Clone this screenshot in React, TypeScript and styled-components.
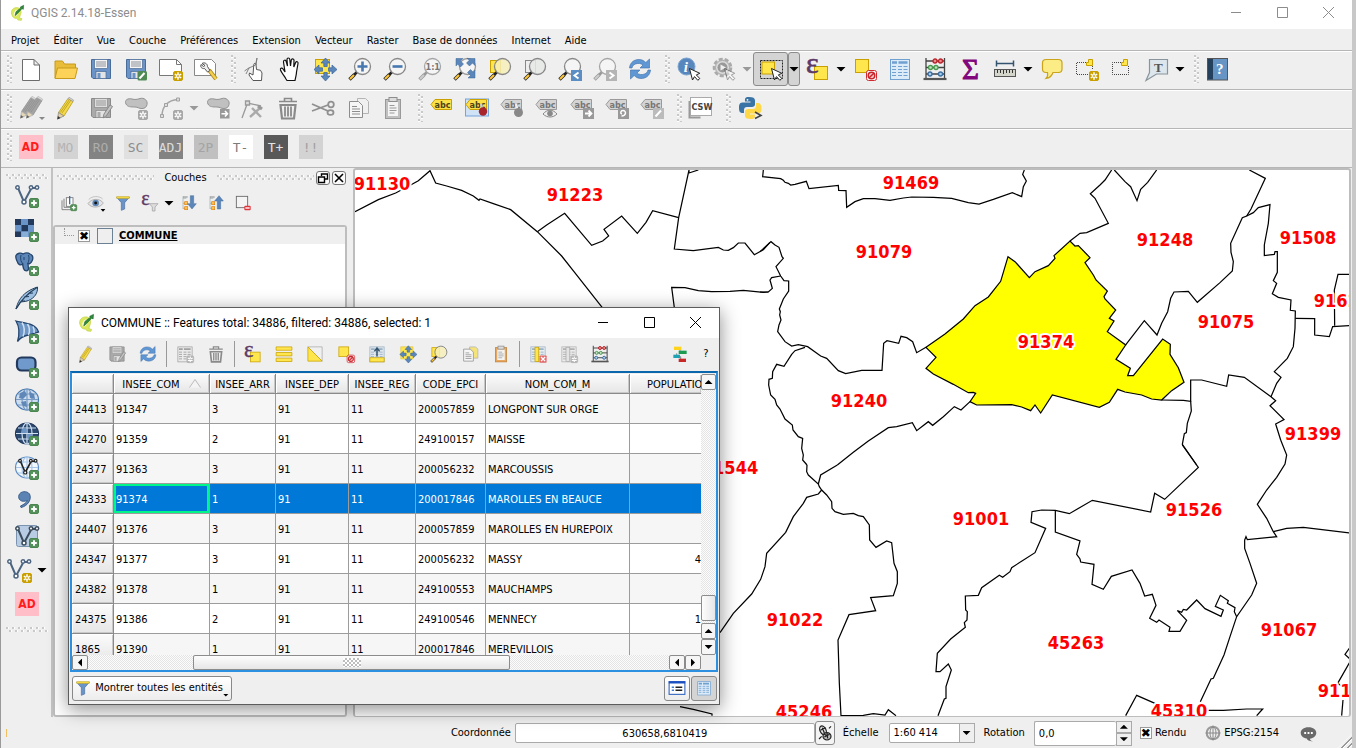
import React from "react";
import styled, { createGlobalStyle, css } from "styled-components";

const UI = `"DejaVu Sans Condensed", "DejaVu Sans", sans-serif`;
const TITLE = `Roboto, "Open Sans", sans-serif`;

const Global = createGlobalStyle`
  *, *::before, *::after { box-sizing: border-box; }
  body { margin: 0; background: #c8c8c8; font: 11px/14px ${UI}; color: #000; }
  button, input, select { font: inherit; color: inherit; margin: 0; }
  button { padding: 0; border: 0; background: none; }
`;

/* ---------- icon parts ---------- */

const Plus = () => (
  <g>
    <rect x="14.5" y="14.5" width="9" height="9" rx="1.5" fill="#55915a" stroke="#4a8550" />
    <path d="M19 16.2v5.6M16.2 19h5.6" stroke="#fff" strokeWidth="2" />
  </g>
);
const Star = ({ c = "#c9a000", x = 14, y = 14 }: { c?: string; x?: number; y?: number }) => (
  <g transform={`translate(${x} ${y})`}>
    <rect x=".5" y=".5" width="9" height="9" rx="1.5" fill={c} stroke={c} />
    <path d="M5 1.2v7.6M1.8 3.2l6.400 3.6M8.200 3.2L1.800 6.8" stroke="#fff" strokeWidth="1.500" />
    <circle cx="5" cy="5" r=".9" fill={c} />
  </g>
);
const Cursor = ({ o = 1 }: { o?: number }) => (
  <path d="M12.500 11.500l3 11.500 2-3.400 3.300 3.700 2-1.800-3.500-3.600 3.500-1.600z" fill="#fff" stroke="#222" strokeWidth="1" opacity={o} />
);
const Lens = ({ h = "#fcc53a", k = "#222", s = "#888", f = "#f4f6f4" }) => (
  <g>
    <path d="M9 15L5.500 18.500" stroke={k} strokeWidth="2.600" />
    <path d="M6.500 17.500L1.500 22.500" stroke={k} strokeWidth="3.400" />
    <path d="M6 18L2 22" stroke={h} strokeWidth="2.200" />
    <circle cx="14.500" cy="9.500" r="8" fill={f} fillOpacity=".85" stroke={s} strokeWidth="1.300" />
  </g>
);
const Floppy = ({ b = "#6a94c8", e = "#4a6c98", l = "#f4f4f4", t = "#8a9199" }) => (
  <g>
    <path d="M2.500 2.500h19v19H4l-1.500-1.500z" fill={b} stroke={e} />
    <rect x="5.500" y="2.500" width="13" height="9" fill={l} stroke={e} strokeWidth=".7" />
    <path d="M7 5h10M7 7h10M7 9h10" stroke={t} strokeWidth="1" />
    <rect x="7" y="14.500" width="10" height="7" fill="#e4e4e4" stroke={e} strokeWidth=".7" />
    <rect x="8.500" y="16" width="3" height="5" fill={b} />
  </g>
);
const Pencil = ({ b = "#f4d84a", d = "#b89c18", t = "#8a8a8a" }) => (
  <g>
    <path d="M4.500 16.500L14 2.500l5 3L10 20z" fill={b} stroke={d} strokeWidth=".8" />
    <path d="M8 17L17 4M6.300 16.500L15.500 3.500" stroke={d} strokeWidth=".8" />
    <path d="M4.500 16.500L3.500 23l6.500-3z" fill="#e2cfa4" stroke={t} strokeWidth=".8" />
    <path d="M3.300 23.500l.6-3.500 2.600 2z" fill="#333" />
    <path d="M14 2.500l1-1.200 4.500 2.700-.5 1.500z" fill="#ddd" stroke={t} strokeWidth=".6" />
  </g>
);
const Refresh = () => (
  <g fill="#5f96d4" stroke="#3c6ea8" strokeWidth=".6">
    <path d="M1.500 11C2 5 6.500 2.500 11 2.500c3 0 5 1.200 6.800 3L21.500 2v9h-9.500l3-3C13 6.300 10 6 7.500 7c-2 .8-3 2-3.500 4z" />
    <path d="M22.500 13c-.5 6-5 8.500-9.500 8.500-3 0-5-1.200-6.800-3L2.500 22v-9h9.500l-3 3c2 1.700 5 2 7.500 1 2-.8 3-2 3.500-4z" />
  </g>
);
const Trash = ({ c = "#8a8a8a" }) => (
  <g fill="none" stroke={c} strokeWidth="1.600">
    <path d="M3 5.500h18M8.500 5V2.500h7V5" />
    <path d="M4.500 9h15l-1.500 13.500H6z" strokeWidth="2.200" />
    <path d="M9 10.500v10M12 10.500v10M15 10.500v10" strokeWidth="1.800" />
  </g>
);
const Epsilon = ({ s = 30, x = 0, y = 16 }) => (
  <text x={x} y={y} fontSize={s} fontFamily="Liberation Serif, serif" fill="#5d3a66" stroke="#5d3a66" strokeWidth=".6">ε</text>
);
const No = () => (
  <g>
    <rect x="13.500" y="13.500" width="10" height="10" rx="2" fill="#fff" stroke="#d02a30" />
    <circle cx="18.500" cy="18.500" r="3.300" fill="#f4c4c4" stroke="#c8242c" strokeWidth="1.500" />
    <path d="M16.200 20.800l4.600-4.600" stroke="#c8242c" strokeWidth="1.500" />
  </g>
);
const Label = ({ f = "#d4d4d4", s = "#9a9a9a", t = "#777" }) => (
  <g>
    <path d="M1 8.500L5 3.500h16.500v10H5z" fill={f} stroke={s} />
    <text x="4.500" y="11.500" fontSize="9" fontWeight="bold" fontFamily="DejaVu Sans Condensed, DejaVu Sans, sans-serif" fill={t}>abc</text>
  </g>
);
const Table = ({ c = "#6fa0d0", f = "#dcebf8" }) => (
  <g>
    <rect x="2.500" y="2.500" width="19" height="20" fill={f} stroke={c} />
    <path d="M4 5.500h5M10.500 5.500h9" stroke={c} strokeWidth="2.400" />
    <path d="M4 9.500h4M10 9.500h4M15.500 9.500h4M4 12.500h4M10 12.500h4M15.500 12.500h4M4 15.500h4M10 15.500h4M15.500 15.500h4M4 18.500h4M10 18.500h4M15.500 18.500h4" stroke={c} strokeWidth="1.200" />
  </g>
);
const Blob = () => (
  <path d="M2 8c-2-4 2-6 6-5 3 .8 5 .5 8-.500 4-1.200 8 2 7 6-.5 2.500-2 4-5 4-3 .2-4-1.500-7-1.500C7 11 3.500 11 2 8z" fill="#c0c0c0" stroke="#929292" />
);
const Abacus = () => (
  <g fill="none" strokeWidth="1.300">
    <path d="M3 1v21M21.500 1v21M3 4h18.500M3 10.500h18.500M3 17h18.500" stroke="#444" />
    <path d="M.5 22h23" stroke="#555" strokeWidth="2.200" />
    <g stroke="#b8242c" fill="#e88"><circle cx="12" cy="4" r="2" /><circle cx="17.500" cy="4" r="2" /></g>
    <g stroke="#4a9a50" fill="#bfe4bf"><circle cx="7.500" cy="10.500" r="2" /><circle cx="13" cy="10.500" r="2" /></g>
    <g stroke="#3c6ea0" fill="#a8cdee"><circle cx="7" cy="17" r="2" /><circle cx="17.500" cy="17" r="2" /></g>
  </g>
);
const Filter = () => (
  <g>
    <path d="M2.500 3.500h19l-7 8v9.500l-5 2v-11.500z" fill="#6a94c8" stroke="#4a70a0" />
    <path d="M2.500 2.500h19v2.500h-19z" fill="#ffe34a" stroke="#c0a010" strokeWidth=".8" />
  </g>
);
const Vee = ({ c = "#4c6480" }) => (
  <g fill="#fff" stroke={c} strokeWidth="1.500">
    <path d="M3 4l6 14L16 5M16 4h6" strokeWidth="2" fill="none" />
    <circle cx="2.500" cy="3.500" r="1.700" /><circle cx="9" cy="18" r="2" /><circle cx="16" cy="3.500" r="1.700" /><circle cx="22" cy="3.500" r="1.700" />
  </g>
);
const Globe = ({ f = "#cfdeee", s = "#4a7ab0", g = "#7a9cc4" }) => (
  <g fill="none" stroke={g} strokeWidth="1.200">
    <ellipse cx="12" cy="11.500" rx="11.500" ry="10.500" fill={f} stroke={s} />
    <ellipse cx="12" cy="11.500" rx="5" ry="10.500" />
    <path d="M12 1v21M1 11.500h22M3 6h18M3 17h18" />
  </g>
);
const Arrows4 = () => (
  <g fill="#5a86ba" stroke="#3c6596" strokeWidth=".7">
    <path d="M12.500 1l4.500 5h-2.800v3.500h-3.400V6H8zM12.500 24l4.500-5h-2.800v-3.500h-3.400V19H8zM1 12.500L6 8v2.800h3.500v3.400H6V17zM24 12.500L19 8v2.800h-3.500v3.400H19V17z" />
  </g>
);
const Docs = ({ f = "#f0f0f0", s = "#8d8d8d" }) => (
  <g>
    <path d="M11.500 2.500h8l3 3v12h-11z" fill={f} stroke="#b4b4b4" />
    <path d="M3.500 5.500h9l4 4v12h-13z" fill="#f6f6f6" stroke={s} />
    <path d="M6 10.500h5M6 13h8M6 15.500h8M6 18h8" stroke={s} />
  </g>
);
const Clip = ({ b = "#c0c0c0", s = "#999" }) => (
  <g>
    <rect x="4.500" y="3.500" width="15" height="19" fill={b} stroke={s} />
    <rect x="7" y="6" width="10" height="14" fill="#f4f4f4" />
    <rect x="8" y="1.500" width="8" height="4" fill="#ddd" stroke="#8d8d8d" />
    <path d="M8.500 9.500h5M8.500 12h7M8.500 14.500h7M8.500 17h5" stroke="#9a9a9a" />
  </g>
);
const Leaf = () => (
  <g>
    <path d="M4 14C2 8 7 3 13 4c5 1 6 6 4.500 10-1 3-2 4-1 6l3 .5-1 2.500-5-.5-2-2.500c-4 .5-6.500-2-7.500-6z" fill="#dce85c" stroke="#c2d048" />
    <ellipse cx="10.500" cy="12" rx="3" ry="5" fill="#fafad8" transform="rotate(25 10.500 12)" />
    <path d="M9 16L10.500 10 17.500 4.500 17 3l5-2.500-.5 6-2-1L12.500 13z" fill="#2f8a3c" stroke="#1c6328" strokeWidth=".8" />
  </g>
);
const Tree = () => (
  <g>
    <path d="M3 2v19M3 5h5M3 12.500h5M3 20h5" stroke="#9aa" fill="none" />
    <rect x="5.500" y="10" width="4.500" height="4.500" fill="#ffc04a" stroke="#e08010" />
    <rect x="5.500" y="17.500" width="4.500" height="4.500" fill="#ffc04a" stroke="#e08010" />
    <path d="M3 3h7" stroke="#888" strokeWidth="1.500" />
  </g>
);

const icons: Record<string, React.ReactNode> = {
  leaf: <Leaf />,
  newDoc: <path d="M3.500 2.500h11.500l5.500 5.500v15.500h-17zM15 2.500V8h5.500" fill="#fff" stroke="#6c6c6c" />,
  open: <g stroke="#c79a1c"><path d="M1 21V4h7.500l2 3h11v5" fill="#e9bd3a" /><path d="M1 21.500L3.500 11h20L21 21.500z" fill="#fcd358" /></g>,
  save: <Floppy />,
  saveAs: <g><Floppy /><rect x="13.500" y="14" width="9.500" height="9.500" rx="1.500" fill="#4f8a55" /><path d="M15.500 21.500l5-5.500" stroke="#fff" strokeWidth="2" /></g>,
  composer: <g><path d="M.5 2.500h17l5 5v11H.5z" fill="#fff" stroke="#777" /><path d="M17.500 2.500v5h5" fill="none" stroke="#777" /><Star /></g>,
  manager: <g><path d="M.5 2.500h17l4 4v12H.5z" fill="#fff" stroke="#888" /><path d="M15 13l7 9" stroke="#a5811c" strokeWidth="4" /><path d="M15 13l7 9" stroke="#f2cf4c" strokeWidth="2.500" /><path d="M8 6.500c2.500-1.500 5.500 0 5.500 3l2.500 4-2.500 1.500-3-3.500C7.500 12 6 9.500 7 7.500l2.500 2 1.500-1z" fill="#eee" stroke="#555" /></g>,
  touch: <g fill="#fff" stroke="#444" strokeWidth=".9"><path d="M10 23.500l-4-5.500.5-2 3.500 2 .8-10.500c.3-1.600 2-1.600 2.200 0l.5 5 4 .8 1.500 2.700-.5 7.500z" /><path d="M1.500 14l5-3.500M3 17l3-6 6.500-3L14 1l-1 7" stroke="#777" fill="none" /></g>,
  pan: <path d="M8 22c-1.500-3-4.500-6-5.500-9-.5-2 1.500-2.500 2.500-1l2 3L5.500 5c-.3-2 2.200-2.500 2.700-.500L9.500 9 9 2.500c0-2 2.600-2 2.800 0L12.500 9l.8-6c.3-1.800 2.700-1.500 2.700.3L15.800 10l1.800-4.500c.8-1.500 2.800-.8 2.400 1L18.500 15c0 3-1 5-1.500 8.500H9z" fill="#fff" stroke="#111" strokeWidth="1.200" />,
  panSel: <g><rect x="2.500" y="2.500" width="14" height="14" fill="#ffe64c" stroke="#c9a000" /><Arrows4 /></g>,
  zoomIn: <g><Lens /><path d="M14.500 4.500v10M9.500 9.500h10" stroke="#4878b0" strokeWidth="2.600" /></g>,
  zoomOut: <g><Lens /><path d="M9.500 9.500h10" stroke="#4878b0" strokeWidth="2.600" /></g>,
  zoomOne: <g><Lens h="#ccc" k="#999" s="#a5a5a5" /><text x="7.500" y="13" fontSize="9" fontWeight="bold" fontFamily="DejaVu Sans Condensed, DejaVu Sans, sans-serif" fill="#777">1:1</text></g>,
  zoomFull: <g><Lens s="#999" /><path d="M3 1.500h7L7.500 4l3 3-3 3-3-3L3 9zM22 1.500v7L19.500 6l-3 3-3-3 3-3L14 1.500zM22 21h-7l2.500-2.500-3-3 3-3 3 3L22 13z" fill="#5a86ba" stroke="#3c6596" strokeWidth=".5" /></g>,
  zoomSel: <g><rect x="2.500" y="3.500" width="10" height="12" fill="#ffe64c" stroke="#c9a000" /><Lens f="#f7eeb8" /></g>,
  zoomLayer: <g><rect x="2.500" y="3.500" width="10" height="12" fill="#eee" stroke="#888" /><Lens f="#e6e9e6" /></g>,
  zoomLast: <g><Lens /><rect x="13" y="13" width="11" height="11" fill="#5b8ec2" /><path d="M20.500 15.500l-4 3 4 3" stroke="#fff" strokeWidth="2" fill="none" /></g>,
  zoomNext: <g><Lens h="#ccc" k="#999" s="#a5a5a5" /><rect x="13" y="13" width="11" height="11" fill="#b4b4b4" /><path d="M16.500 15.500l4 3-4 3" stroke="#fff" strokeWidth="2" fill="none" /></g>,
  refresh: <Refresh />,
  identify: <g><circle cx="9.500" cy="9.500" r="8.500" fill="#5787bd" stroke="#7aa3d0" /><text x="6.800" y="14.500" fontSize="15" fontStyle="italic" fontWeight="bold" fontFamily="Liberation Serif, serif" fill="#fff">i</text><Cursor /></g>,
  action: <g><circle cx="10.500" cy="10.500" r="8.500" fill="#ddd" stroke="#aaa" strokeWidth="2.600" strokeDasharray="4 2" /><circle cx="10.500" cy="10.500" r="7" fill="#ddd" stroke="#aaa" /><circle cx="10.500" cy="10.500" r="5" fill="#999" /><path d="M8.500 7.500l5.500 3-5.500 3z" fill="#eee" /><Cursor o={0.4} /></g>,
  select: <g><rect x="1.500" y="3.500" width="22" height="18" fill="none" stroke="#222" strokeDasharray="2 1" /><rect x="3" y="5" width="12.500" height="12" fill="#ffe64c" stroke="#c9a000" /><Cursor /></g>,
  selExpr: <g><rect x="8.500" y="9.500" width="13" height="13" fill="#ffe64c" stroke="#c9a000" /><Epsilon /></g>,
  deselect: <g><rect x="2.500" y="2.500" width="13" height="13" fill="#ffe64c" stroke="#c9a000" /><No /></g>,
  table: <Table />,
  abacus: <Abacus />,
  sigma: <text x="4" y="22" fontSize="29" fontFamily="Liberation Serif, serif" fill="#82067c" stroke="#82067c">Σ</text>,
  ruler: <g><path d="M3.500 6.500h17M3.500 3.500v6M20.500 3.500v6" stroke="#33536e" strokeWidth="1.500" /><rect x="1.500" y="12.500" width="21" height="7" fill="#d4d6cc" stroke="#555" /><path d="M4.500 13v3M7.500 13v3M10.500 13v4M13.500 13v3M16.500 13v3M19.500 13v3" stroke="#333" /></g>,
  tip: <path d="M6 2.500h12.500c2 0 3.500 1.500 3.500 3.500v6c0 2-1.500 3.500-3.500 3.500H13c-1 3-3.500 5.500-7 6 1.500-1.500 2-3.500 1.500-6H6c-2 0-3.500-1.500-3.500-3.500V6c0-2 1.500-3.500 3.500-3.500z" fill="#fbec86" stroke="#c9a41c" strokeWidth="1.200" />,
  bmNew: <g><path d="M11 5.500H1.500v12H13M17.500 9v4" fill="none" stroke="#444" strokeDasharray="1 1" /><path d="M13.500 2.500h4v6h-6v-3h2z" fill="#ffe64c" stroke="#c9a000" /><Star /></g>,
  bmShow: <g><path d="M11 5.500H2.500v12h16V9" fill="none" stroke="#444" strokeDasharray="1 1" /><path d="M13.500 2.500h4v6h-6v-3h2z" fill="#ffe64c" stroke="#c9a000" /></g>,
  textNote: <g><path d="M4.500 2.500h18v14.500h-11L1 23.500l3.500-8z" fill="#dce6ec" stroke="#8a949c" strokeWidth="1.200" /><text x="9" y="14.500" fontSize="13" fontWeight="bold" fontFamily="Liberation Serif, serif" fill="#555">T</text></g>,
  help: <g><rect x="1.500" y="1.500" width="20" height="21.500" fill="#6694c4" stroke="#555" /><rect x="2" y="2" width="5" height="20.500" fill="#24405c" /><text x="10" y="17" fontSize="15" fontFamily="Liberation Serif, serif" fontWeight="bold" fill="#fff">?</text></g>,
  pencils: <g><g opacity=".75"><g transform="translate(-2 -1)"><Pencil b="#8b8b8b" d="#707070" t="#999" /></g><g transform="translate(4 -1)"><Pencil b="#8b8b8b" d="#707070" t="#999" /></g></g><path d="M20 21h6l-3 3z" fill="#888" /></g>,
  pencil: <Pencil />,
  saveEdit: <g><Floppy b="#aaa" e="#8a8a8a" l="#ddd" t="#999" /><path d="M14 22l1-4 6-9 2.500 1.500-6 9z" fill="#c4c4c4" stroke="#888" /></g>,
  blobStar: <g><Blob /><Star c="#a8a8a8" /></g>,
  curve: <g><path d="M3 20C3 10 9 4 19 3.500" fill="none" stroke="#a4a4a4" strokeWidth="1.500" /><path d="M1.500 18.500h3v3h-3zM5.500 7.500h3v3h-3zM17.500 2h3v3h-3z" fill="#ddd" stroke="#a0a0a0" /><Star c="#a8a8a8" /></g>,
  blobArrow: <g><Blob /><rect x="14" y="13" width="9.500" height="9.500" fill="#999" /><path d="M15.500 17.700h6M19 15l2.500 2.700L19 20.500" stroke="#fff" strokeWidth="1.600" fill="none" /></g>,
  node: <g fill="none" stroke="#999" strokeWidth="1.300"><path d="M1 22L6.500 7 20 10" /><path d="M4.500 5h4v4h-4z" fill="#ddd" /><path d="M9 21l10-9M11 12l9 9" strokeWidth="2.400" stroke="#aaa" /><path d="M17 10l4 3" strokeWidth="3" /></g>,
  trash: <Trash />,
  cut: <g fill="none" stroke="#909090" strokeWidth="1.800"><path d="M1 8l16 7M1 15l16-6" /><circle cx="20" cy="8.500" r="2.800" /><ellipse cx="19.500" cy="16.500" rx="3" ry="2.400" /></g>,
  copy: <Docs />,
  paste: <Clip />,
  abcY: <Label f="#fbe04a" s="#c9a000" t="#4c4414" />,
  abcPin: <g><rect x=".5" y="3" width="23" height="17" fill="#cfe2f6" stroke="#74a4dc" /><Label f="#fbe04a" s="#c9a000" t="#4c4414" /><path d="M16 8l1.500 6" stroke="#ccc" strokeWidth="2.500" /><circle cx="18" cy="15.500" r="4.200" fill="#a8242c" /></g>,
  abcPinG: <g><Label /><path d="M16 8l1.500 6" stroke="#eee" strokeWidth="2.500" /><circle cx="18.500" cy="16.500" r="4.500" fill="#888" /></g>,
  abcEye: <g><Label /><path d="M8 18c4-5 10-5 14 0-4 4-10 4-14 0z" fill="#eee" stroke="#888" /><circle cx="15" cy="17.500" r="2.800" fill="#888" /></g>,
  abcMove: <g><Label /><rect x="13" y="12" width="11" height="11" fill="#999" /><path d="M15 17.500h6M18.500 14.500l3 3-3 3" stroke="#fff" strokeWidth="1.800" fill="none" /></g>,
  abcRot: <g><Label /><rect x="13" y="12" width="11" height="11" fill="#999" /><path d="M16.500 20c5 0 5-5.500 1.500-5.500-2.500 0-3 3-1 3.500" stroke="#fff" strokeWidth="1.500" fill="none" /></g>,
  abcEdit: <g><Label /><rect x="13" y="12" width="11" height="11" fill="#bbb" /><path d="M15.500 20.500l5.500-6" stroke="#fff" strokeWidth="2" /></g>,
  csw: <g><path d="M.5 5v16.500h11" fill="none" stroke="#999" strokeWidth="2" /><rect x="1.500" y="1.500" width="21" height="18" fill="#fff" stroke="#aaa" /><text x="2.500" y="14" fontSize="9" fontWeight="bold" fontFamily="DejaVu Sans Condensed, DejaVu Sans, sans-serif" fill="#444">CSW</text></g>,
  python: <g><path d="M11 1C6.500 1 7 3 7 5.500h5.500v1H4.500C1 6.500 1 10 1 11.500S1 17 4 17h2v-3c0-2 1-3 3-3h5c1.500 0 3-1 3-2.500V4.500C17 2 15 1 11 1z" fill="#3a73a5" /><circle cx="9.500" cy="3.800" r=".9" fill="#fff" /><path d="M12.500 23c4.500 0 4.500-2 4.500-4.500h-5v-1h8c3 0 3.500-3 3.500-5S23 7 20 7h-2v3c0 2-1 3-3 3h-5c-1.500 0-3 1-3 2.500V20c0 2 2 3 5.500 3z" fill="#ffd848" /><path d="M17 16l6 3.500-6 3" stroke="#444" strokeWidth="1.600" fill="none" /></g>,
  vector: <g><Vee /><Plus /></g>,
  vectorNew: <g><Vee /><Star x={15} y={15} /></g>,
  raster: <g><path d="M0 1h19v18H0z" fill="#6a94c8" /><path d="M0 1h6v6H0zM13 1h6v6h-6zM6.500 7h6.500v6.500H6.500zM0 13.500h6V19H0z" fill="#22395c" /><path d="M6.500 13.500H13V19H6.500z" fill="#88aed8" /><Plus /></g>,
  postgis: <g><path d="M1 3.500C2 1 6 .5 8 2c2-1 5-1.500 7 0 3 1 3.500 4 2 7-1 2-2 3-4 3l.5 5c-.5 2.500-4 2.500-5-.5L7.500 12C5 14 3 12 2 9 1 7 .5 5 1 3.500z" fill="#5d86b8" stroke="#23456e" strokeWidth="1.300" /><path d="M6 3c-1 4 0 8 2.500 9M13.500 3c1 3 .5 6-1 9M9 5v3" stroke="#23456e" fill="none" /><Plus /></g>,
  spatialite: <g><path d="M1 23C3 15 7 6 22.500 1c.5 6-3 11-9 13.500-4 1.500-6 1-8 1.500z" fill="#9dbfe2" stroke="#24405c" /><path d="M1 23C5 16 10 9 22 1.500M6 15l4 0M9 11l5-.5M13 7.500l5-.5" stroke="#24405c" fill="none" strokeWidth="1.200" /><Plus /></g>,
  mssql: <g><path d="M1 1c7 2 20 2 22.500 11L13 15C8 16 5 18 2.500 21.500 5 13 4 6 1 1z" fill="#6d96c6" stroke="#23456e" strokeWidth="1.300" /><path d="M7 2.500c2.500 4 3 9 1 14M12.500 4c2 3 2.500 7 1 11M18 6.500c1 2 1.500 4 1 6.500" stroke="#cfe0f2" fill="none" strokeWidth="1.500" /><Plus /></g>,
  oracle: <g><rect x="2" y="3.500" width="18.500" height="13" rx="4.500" fill="#6f9acb" stroke="#23395c" strokeWidth="2.200" /><Plus /></g>,
  wms: <g><Globe /><path d="M5 5l5-2 2 4-4 4-4-1zM14 4l5 2 1 5-5-1zM6 14l5-1 1 6-4-1z" fill="#5f88b8" /><Plus /></g>,
  wcs: <g><Globe f="#2c4a70" s="#23395c" g="#cfe0f2" /><path d="M7 6.500h4.500V11H7zM12.500 12H17v4.500h-4.500z" fill="#6d96c6" /><Plus /></g>,
  wfs: <g><Globe f="#f2f7fc" g="#a8c6e6" s="#5f8fc6" /><g transform="translate(3 2) scale(.8)"><Vee c="#222" /></g><Plus /></g>,
  csv: <g><path d="M12.500 10.500C6 13 2.500 9 4 5c1.500-4 8-4.500 10.500-1C17 9 13 16 6 17.500l-.5-1.500c3.500-1.500 6-3.500 7-5.500z" fill="#5b83b4" stroke="#3c608c" /><Plus /></g>,
  virtual: <g><rect x="1.500" y="1.500" width="21" height="21" rx="2" fill="#b8cde4" stroke="#7a94b0" /><g transform="translate(0 1)"><Vee c="#3c4c5c" /></g><Plus /></g>,
  groupAdd: <g fill="#fff" stroke="#777" strokeWidth="1.300"><path d="M1.500 8v14h13" fill="none" /><path d="M4.500 5.500v13h13" fill="none" /><rect x="8" y="4" width="10" height="13" /><path d="M13 14V1.500" stroke="#3c6ea8" strokeWidth="2" /><Plus /></g>,
  eye: <g><path d="M0 13C5 5 17 4 23 12c-5 8-18 8-23 1z" fill="#e4e4e4" stroke="#999" /><circle cx="11.500" cy="12" r="5" fill="#5f88b8" /><circle cx="11.500" cy="12" r="2.200" fill="#111" /><path d="M1 7c5-6 16-6 21-1" stroke="#aaa" fill="none" /><path d="M19 21h7l-3.500 4z" fill="#000" /></g>,
  filter: <Filter />,
  exprFilter: <g><Epsilon x={-1} y={15} /><path d="M11 13h13l-4.500 5v6h-4v-6z" fill="#ddd" stroke="#999" /></g>,
  expand: <g><Tree /><path d="M14 1h5v12h4l-6.500 8L10 13h4z" fill="#5a86ba" stroke="#3c6596" strokeWidth=".7" /></g>,
  collapse: <g><Tree /><path d="M14 21h5V9h4l-6.500-8L10 9h4z" fill="#5a86ba" stroke="#3c6596" strokeWidth=".7" /></g>,
  remove: <g><rect x="2" y="2" width="17" height="17" fill="#f4f4f4" stroke="#666" strokeWidth="1.300" /><rect x="14" y="16" width="9.500" height="7" rx="1.500" fill="#e0343c" /><path d="M15.500 19.500h6.500" stroke="#fff" strokeWidth="2" /></g>,
  tableNew: <g><Table c="#a0a0a0" f="#ececec" /><Star c="#b4b4b4" /></g>,
  selAll: <g fill="#ffe64c" stroke="#c9a000"><path d="M1.500 2.500h21v4.500h-21zM1.500 10h21v4.500h-21zM1.500 17.500h21V22h-21z" /></g>,
  invert: <g><path d="M2.500 2.500h19v19z" fill="#f0f0f0" stroke="#aaa" /><path d="M2.500 2.500v19h19z" fill="#ffe64c" stroke="#c9a000" /></g>,
  moveTop: <g><Table c="#9ab0c4" f="#e0e8ee" /><rect x="2.500" y="17" width="19" height="5.500" fill="#ffe64c" stroke="#c9a000" /><path d="M12 15V5M8.500 8.500L12 4l3.500 4.500" stroke="#33536e" strokeWidth="2" fill="none" /></g>,
  panSel2: <g><rect x="2.500" y="2.500" width="16" height="16" fill="#ffe64c" stroke="#e0c43a" /><Arrows4 /></g>,
  copyY: <Docs f="#f4e27a" />,
  pasteO: <Clip b="#e9a860" s="#c08038" />,
  colDel: <g><Table c="#9ab0c4" f="#e8eef2" /><rect x="8" y="3" width="5" height="19" fill="#ffe64c" stroke="#c9a000" /><rect x="14" y="14" width="9.500" height="9.500" rx="1" fill="#e46a6c" /><path d="M16 16l5.500 5.500M21.500 16L16 21.500" stroke="#fff" strokeWidth="1.800" /></g>,
  colNew: <g><Table c="#b0b0b0" f="#ececec" /><rect x="8" y="3" width="5" height="19" fill="#e4e4e4" stroke="#aaa" /><Star c="#b4b4b4" /></g>,
  dock: <g><path d="M12 5v4M7 11v5h6v4" stroke="#555" fill="none" /><path d="M3 1h11v5H3z" fill="#ffd21c" /><path d="M10 7h12v5H10z" fill="#1c9c50" /><path d="M2 13h10v5H2z" fill="#1ca4b4" /><path d="M10 19h11v5H10z" fill="#c82828" /></g>,
  form: <g><rect x="1.500" y="3.500" width="21" height="17" fill="#fff" stroke="#3a6abf" strokeWidth="1.500" /><path d="M1 4.500h22" stroke="#1a4fc0" strokeWidth="3" /><path d="M5 11h3M5 15h3" stroke="#3a7ad8" strokeWidth="2" /><path d="M10 11h9M10 15h9" stroke="#222" strokeWidth="2" /></g>,
  mouse: <g fill="none" stroke="#222" strokeWidth="1.800"><ellipse cx="9" cy="8" rx="4.500" ry="7" transform="rotate(-25 9 8)" fill="#ddd" /><ellipse cx="15" cy="17" rx="6" ry="5.500" fill="#bbb" /><path d="M5 8l8-4M8 4l3 8M11 18l8-4M15 12l1 8M3 21l4-4M18 5l3-3M10 13l6 4" /></g>,
  crs: <g fill="none" stroke="#888" strokeWidth="1.500"><circle cx="12" cy="12" r="9.500" strokeWidth="3" stroke="#9a9a9a" /><ellipse cx="12" cy="12" rx="4.500" ry="9" /><path d="M1 12h22M12 1v22" /></g>,
  bubble: <g><path d="M12 3c7 0 11 3.500 11 8s-4 8-9 8.300c0 2 2 3 4.500 3.500-4 .7-8-1-9-3.800C4 18.500 1 15 1 11c0-4.500 4-8 11-8z" fill="#6a6a6a" /><path d="M6 10h2.600v2.600H6zM10.700 10h2.600v2.600h-2.600zM15.400 10H18v2.600h-2.600z" fill="#fff" /></g>,
};

const Svg = styled.svg`
  display: block;
  flex: none;
  overflow: visible;
`;
const Icon = ({ name, size = 24 }: { name: string; size?: number }) => (
  <Svg width={size} height={size} viewBox="0 0 24 24" aria-hidden="true">{icons[name]}</Svg>
);

const Arrow = styled.span<{ $c?: string; $dir?: "up" | "down" | "left" | "right"; $s?: number }>`
  flex: none;
  width: ${(p) => (p.$s ?? 5) * (p.$dir === "left" || p.$dir === "right" ? 1 : 2)}px;
  height: ${(p) => (p.$s ?? 5) * (p.$dir === "left" || p.$dir === "right" ? 2 : 1)}px;
  background: ${(p) => p.$c ?? "#000"};
  clip-path: ${(p) =>
    ({
      up: "polygon(50% 0, 100% 100%, 0 100%)",
      down: "polygon(0 0, 100% 0, 50% 100%)",
      left: "polygon(100% 0, 100% 100%, 0 50%)",
      right: "polygon(0 0, 100% 50%, 0 100%)",
    })[p.$dir ?? "down"]};
`;

/* ---------- main window ---------- */

const Window = styled.main`
  min-height: 100vh;
  margin-right: 4px;
  display: flex;
  flex-direction: column;
  position: relative;
  background: #efefef;
  border-left: 1px solid #9a9a9a;
`;
const TitleBar = styled.header<{ $dim?: boolean }>`
  height: ${(p) => (p.$dim ? 29 : 30)}px;
  background: #fff;
  color: ${(p) => (p.$dim ? "#8c8c8c" : "#000")};
  display: flex;
  align-items: center;
  padding: 0 1px ${(p) => (p.$dim ? 4 : 1)}px 8px;
  font: 12px/16px ${TITLE};
`;
const Caption = styled.h1`
  margin: 0 auto 0 6px;
  font: inherit;
  white-space: nowrap;
`;
const WinButton = styled.button`
  width: 46px;
  height: 24px;
  display: grid;
  place-items: center;
`;
const WinButtons = () => (
  <>
    <WinButton aria-label="Réduire"><Svg width="11" height="11"><path d="M0 5.500h10" stroke="currentColor" /></Svg></WinButton>
    <WinButton aria-label="Agrandir"><Svg width="11" height="11"><path d="M.5 .5h10v10H.5z" stroke="currentColor" fill="none" /></Svg></WinButton>
    <WinButton aria-label="Fermer"><Svg width="11" height="11"><path d="M0 0l11 11M11 0L0 11" stroke="currentColor" /></Svg></WinButton>
  </>
);
const MenuBar = styled.nav`
  height: 22px;
  display: flex;
  gap: 14px;
  padding: 2px 0 0 10px;
  border-bottom: 1px solid #b6b6b6;
`;
const ToolRow = styled.div`
  height: 39px;
  display: flex;
  align-items: center;
  gap: 2px;
  padding-bottom: 2px;
  border-bottom: 1px solid #b6b6b6;
  box-shadow: inset 0 1px #fff;
`;
const ToolGroup = styled.div`
  display: flex;
  align-items: center;
`;
const Grip = styled.span`
  width: 5px;
  height: 28px;
  margin: 0 1px 0 6px;
  background:
    repeating-linear-gradient(to bottom, #c9c9c9 0 2px, #fff 2px 3px, transparent 3px 5px) 0 0 / 2px 100% no-repeat,
    repeating-linear-gradient(to bottom, transparent 0 2px, #c9c9c9 2px 4px, #fff 4px 5px) 3px 0 / 2px 100% no-repeat;
`;
const GripH = styled.span`
  flex: 1;
  height: 5px;
  background:
    repeating-linear-gradient(to right, #c9c9c9 0 2px, #fff 2px 3px, transparent 3px 6px) 0 0 / 100% 2px no-repeat,
    repeating-linear-gradient(to right, transparent 0 3px, #c9c9c9 3px 5px, #fff 5px 6px) 0 3px / 100% 2px no-repeat;
`;
const Tool = styled.button`
  width: 35px;
  height: 34px;
  display: flex;
  align-items: center;
  justify-content: center;
`;
const ArrowTool = styled.button`
  width: 12px;
  height: 34px;
  display: grid;
  place-items: center;
`;
const Split = styled.div`
  display: flex;
  width: 47px;
  height: 34px;
  button { border: 1px solid #8c8c8c; border-radius: 3px; background: #d4d4d4; }
`;
const Chip = styled.span<{ $bg: string; $fg: string; $bold?: boolean }>`
  width: 24px;
  height: 24px;
  background: ${(p) => p.$bg};
  color: ${(p) => p.$fg};
  text-align: center;
  white-space: nowrap;
  font: ${(p) => (p.$bold ? `bold 12px/25px ${UI}` : `13px/25px "DejaVu Sans Mono", monospace`)};
`;

type ToolDef = [icon: string, label: string, arrow?: string];
const row1: ToolDef[][] = [
  [["newDoc", "Nouveau"], ["open", "Ouvrir"], ["save", "Sauvegarder"], ["saveAs", "Sauvegarder sous"], ["composer", "Nouveau composeur"], ["manager", "Gestionnaire de composeurs"]],
  [["touch", "Toucher"], ["pan", "Se déplacer"], ["panSel", "Déplacer vers la sélection"], ["zoomIn", "Zoom +"], ["zoomOut", "Zoom -"], ["zoomOne", "Zoom natif"], ["zoomFull", "Zoom étendu"], ["zoomSel", "Zoom sélection"], ["zoomLayer", "Zoom couche"], ["zoomLast", "Zoom précédent"], ["zoomNext", "Zoom suivant"], ["refresh", "Rafraîchir"]],
  [["identify", "Identifier"], ["action", "Action", "#999"], ["select", "Sélectionner", "split"], ["selExpr", "Sélection par expression", "#000"], ["deselect", "Désélectionner"], ["table", "Table d'attributs"], ["abacus", "Calculatrice"], ["sigma", "Statistiques"], ["ruler", "Mesurer", "#000"], ["tip", "Infobulles"], ["bmNew", "Nouveau signet"], ["bmShow", "Signets"], ["textNote", "Annotation", "#000"]],
  [["help", "Aide"]],
];
const row2: ToolDef[][] = [
  [["pencils", "Modifications en cours"], ["pencil", "Mode édition"], ["saveEdit", "Enregistrer"], ["blobStar", "Ajouter une entité"], ["curve", "Chaîne circulaire", "#999"], ["blobArrow", "Déplacer l'entité"], ["node", "Outil de nœud"], ["trash", "Supprimer"], ["cut", "Couper"], ["copy", "Copier"], ["paste", "Coller"]],
  [["abcY", "Étiquetage"], ["abcPin", "Surligner"], ["abcPinG", "Épingler"], ["abcEye", "Montrer"], ["abcMove", "Déplacer"], ["abcRot", "Tourner"], ["abcEdit", "Modifier"]],
  [["csw", "MetaSearch"]],
  [["python", "Console Python"]],
];
const chips: [string, string, string][] = [
  ["AD", "#ffbec8", "#ff1c1c"], ["MO", "#d3d3d3", "#b4b4b4"], ["RO", "#838383", "#adadad"], ["SC", "#e0e0e0", "#8c8c8c"],
  ["ADJ", "#838383", "#dcdcdc"], ["2P", "#c0c0c0", "#a4a4a4"], ["T-", "#fff", "#7c7c7c"], ["T+", "#585858", "#e4e4e4"], ["!!", "#d3d3d3", "#a0a0a0"],
];
const menus = ["Projet", "Éditer", "Vue", "Couche", "Préférences", "Extension", "Vecteur", "Raster", "Base de données", "Internet", "Aide"];

const Tools = ({ groups }: { groups: ToolDef[][] }) => (
  <ToolRow role="toolbar">
    {groups.map((g, i) => (
      <ToolGroup key={i}>
        <Grip />
        {g.map(([icon, label, arrow]) =>
          arrow === "split" ? (
            <Split key={icon}>
              <Tool aria-label={label}><Icon name={icon} /></Tool>
              <ArrowTool aria-label={`${label} : options`}><Arrow /></ArrowTool>
            </Split>
          ) : (
            <React.Fragment key={icon}>
              <Tool aria-label={label}><Icon name={icon} /></Tool>
              {arrow && <ArrowTool aria-label={`${label} : options`}><Arrow $c={arrow} /></ArrowTool>}
            </React.Fragment>
          )
        )}
      </ToolGroup>
    ))}
  </ToolRow>
);

const Body = styled.div`
  flex: 1;
  display: flex;
  min-height: 0;
  padding-right: 1px;
`;
const SideBar = styled.aside`
  flex: none;
  width: 52px;
  padding-left: 2px;
  border-right: 2px solid #c2c2c2;
  display: flex;
  flex-direction: column;
  align-items: center;
`;
const SideGrip = styled.div`
  display: flex;
  width: 42px;
  padding-top: 6px;
`;
const SideTool = styled.button`
  height: 34px;
  display: flex;
  align-items: center;
  gap: 6px;
`;

/* ---------- layer panel ---------- */

const Panel = styled.section`
  flex: none;
  width: 294px;
  display: flex;
  flex-direction: column;
`;
const PanelTitle = styled.div`
  height: 19px;
  display: flex;
  align-items: center;
  gap: 2px;
  padding: 0 1px 0 4px;
  h2 { font: inherit; margin: 0 8px; }
`;
const PanelButton = styled.button`
  width: 14px;
  height: 14px;
  border: 1px solid #777;
  border-radius: 3px;
  background: #fafafa;
  display: grid;
  place-items: center;
`;
const PanelTools = styled.div`
  height: 38px;
  display: flex;
  align-items: flex-start;
  padding: 7px 0 0 2px;
`;
const PanelTool = styled.button<{ $w?: number }>`
  width: ${(p) => p.$w ?? 27}px;
  height: 18px;
  display: grid;
  place-items: center;
`;
const LayerTree = styled.ul`
  flex: 1;
  margin: 0;
  padding: 0;
  list-style: none;
  background: #fff;
  border: 2px solid #bdbdbd;
  border-radius: 3px;
`;
const Layer = styled.li`
  height: 17px;
  display: flex;
  align-items: center;
  background: #efefef;
  padding-left: 9px;
  label { font: bold 11px/16px ${UI}; text-decoration: underline; }
`;
const Branch = styled.span`
  width: 10px;
  height: 8px;
  margin: 0 4px 7px 0;
  border: dotted #999;
  border-width: 0 0 1px 1px;
`;
const Swatch = styled.span`
  width: 16px;
  height: 16px;
  margin: 0 6px 0 7px;
  border: 1px solid #6b8196;
`;
const Check = styled.input`
  appearance: none;
  flex: none;
  width: 12px;
  height: 12px;
  border: 1px solid #9a9a9a;
  background: #fff;
  display: grid;
  place-items: center;
  &:checked::after { content: "✖"; font: 12px/10px "DejaVu Sans", sans-serif; }
`;

/* ---------- map ---------- */

const MapFrame = styled.section`
  flex: 1;
  min-width: 0;
  margin-left: 6px;
  border: 2px solid #bdbdbd;
  border-bottom-width: 1px;
  border-radius: 3px;
  background: #fff;
`;
const MapSvg = styled.svg`
  display: block;
  width: 100%;
  height: 100%;
  text { font: bold 18px "DejaVu Sans Condensed", "DejaVu Sans", sans-serif; fill: #f00; stroke: #fff; stroke-width: 4px; stroke-linejoin: round; paint-order: stroke; text-anchor: middle; }
`;
const sheets: { x: number; y: number; lines: string[] }[] = [
  {
    x: -5, y: -5,
    lines: [
      "15,140 85,104 137,84 182,60 205,47 240,17 257,54 290,63 335,76 370,93 387,106 390,102 430,116 482,134 562,200 635,273 672,320 757,428",
      "562,200 590,180 644,145 725,241 758,228 776,213 762,193 815,153 862,205 888,172 908,137 986,158",
      "1045,15 1017,24 1017,15 986,158 973,252 1030,257 1105,247 1120,255 1135,256 1150,248 1165,234 1185,234 1213,269 1240,254 1260,232",
      "973,428 965,367 1005,368 1045,377 1085,380 1140,379 1180,376 1240,382 1255,381",
    ],
  },
  {
    x: 405, y: -5,
    lines: [
      "10,15 8,35 62,41 70,46 75,52 85,55 92,60 105,58 139,49 147,71 235,61 236,76 258,77 260,127 285,110 310,101 345,101 390,106 430,99 455,96 520,97 575,100 625,113 657,117 700,103 757,83 785,95 790,65 799,48 788,28 793,15",
      "0,260 33,230 45,240 57,247 66,275 70,280 48,305 62,333 72,347 86,348 86,378 70,402 58,432 61,440 59,450 63,465 57,480 53,500 75,530 95,543 115,539 143,545 182,573 200,580 235,617 257,626 305,616 366,616 371,535 381,527 416,535 423,514 440,518 458,530 470,563 498,547",
      "62,333 35,338 30,345 37,370 25,381 0,381",
      "135,547 105,557 95,568 72,604 50,598 38,620 37,640 27,643 26,660 32,690 45,703 50,720 60,732 75,762 97,780 99,795 115,815 128,820 125,850 130,870 128,885 141,900",
      "630,710 603,735 583,725 550,755 518,781 505,770 470,797 457,773 410,785 385,788 325,828 280,862 232,900",
    ],
  },
  {
    x: 695, y: -5,
    lines: [
      "60,228 90,205 110,203 175,175 135,100 121,86 150,60 165,45 185,15",
      "193,15 225,50 242,65 261,107 272,73 293,52 320,15",
      "598,15 646,40 603,132 590,153 577,158 542,235 543,262 550,290 547,318 510,353 442,412 415,379 372,381 362,400 353,440 335,475 321,510 283,467 227,540",
      "590,153 610,143 625,128 660,119 655,175 643,240 643,272 673,268 675,260 682,260 682,322 670,347 680,355 667,386 685,397 723,405 721,436 736,438 735,490 730,545 712,580 673,620 693,637 680,655 663,695",
      "736,460 794,461 794,510 838,515 848,485 900,482",
      "900,328 864,328 853,375 854,482",
      "335,705 400,706 422,709 422,645 455,645 530,664 536,630 583,637 663,695 677,707 660,722 702,764 677,777 692,825",
      "422,709 424,738 412,775 409,803 403,806 397,838 440,900",
    ],
  },
  {
    x: 345, y: 270,
    lines: [
      "321,75 320,95 325,105 355,132 358,140 365,150 380,165 395,185 396,205 405,215 430,223 460,220 475,227 490,230 508,255 509,300 528,322 560,303 575,308 582,370 592,395 592,430 580,467 512,473 527,512 447,524 414,600 418,730 423,827 490,826 520,821 555,825 565,809 588,827",
      "412,75 362,105 355,132",
      "365,150 355,162 320,172 310,190 280,230 257,277 200,340 195,380 182,418 155,462 100,520 60,578",
      "960,367 935,383 930,395 908,412 898,406 845,443 835,466 796,468 797,510 802,515 801,540 793,548 796,562 752,597 712,640 708,695 720,695 745,672 754,690 738,740 738,775 733,777 714,827",
      "-60,800 -20,808 36,822 36,827",
    ],
  },
  {
    x: 665, y: 270,
    lines: [
      "0,367 45,338 77,265 33,247 36,215 65,210 106,211 148,221 217,181 392,216 404,160 434,178 535,82 487,15",
      "106,211 106,276 180,303 170,343 180,357 182,366 222,373 216,433 250,448 274,409 336,390 360,430 374,468 397,463 408,496 389,535 410,547 417,540 450,562 447,574 480,574 500,541 472,512 485,517 490,508 500,510 530,480 555,506 603,529 610,510 586,499 601,466 625,482 622,490 645,503 643,515 650,530",
      "782,0 800,45 795,72 770,112 740,150 712,193 740,235 760,275 770,290 682,299 678,290 674,300 674,325 690,370 710,430 695,465 650,530 630,590 612,645 580,715 573,717 541,785",
      "760,275 800,265 850,262 900,268 990,279",
      "317,827 350,766 405,790",
      "565,811 610,811 680,807 728,807 710,827",
      "990,622 975,643 990,657",
      "990,665 953,730 965,738",
      "969,780 965,827",
    ],
  },
];
const selected =
  "498,547 555,507 610,462 645,422 685,396 722,349 744,275 765,290 808,338 825,320 865,302 885,280 882,272 930,228 945,243 955,242 990,278 975,293 1000,330 1008,345 1042,378 1032,395 1035,402 1067,435 1048,460 1062,468 1042,500 1097,540 1068,583 1111,610 1103,632 1120,632 1208,522 1231,538 1230,568 1255,608 1272,652 1235,677 1205,705 1175,702 1145,690 1095,681 1073,673 1048,712 1018,727 877,690 842,744 825,720 812,737 785,726 755,719 650,720 630,710 647,685 640,682 625,683 580,658 520,627 498,610 528,577";
const mapLabels: [string, number, number][] = [
  ["91130", 27, 20], ["91223", 220, 31], ["91469", 556, 19], ["91079", 529, 88], ["91374", 691, 178], ["91240", 504, 237],
  ["91544", 375, 304], ["91001", 626, 355], ["91022", 440, 456], ["45246", 449, 548], ["91248", 810, 76], ["91508", 953, 74],
  ["91629", 987, 137], ["91075", 871, 158], ["91399", 958, 270], ["91526", 839, 346], ["91067", 934, 466], ["45263", 721, 479],
  ["45310", 824, 547], ["91137", 991, 527],
];

const MapView = () => (
  <MapFrame aria-label="Carte">
    <MapSvg>
      <g fill="none" stroke="#000" strokeWidth="3.700">
        <polygon points={selected} fill="#ff0" transform="translate(405 -5) scale(.33333)" />
        {sheets.map((s) => (
          <g key={`${s.x} ${s.y}`} transform={`translate(${s.x} ${s.y}) scale(.33333)`}>
            {s.lines.map((l) => <polyline key={l} points={l} />)}
          </g>
        ))}
      </g>
      {mapLabels.map(([t, x, y]) => <text key={t} x={x} y={y}>{t}</text>)}
    </MapSvg>
  </MapFrame>
);

/* ---------- status bar ---------- */

const StatusBar = styled.footer`
  height: 31px;
  display: flex;
  align-items: center;
  justify-content: flex-end;
  padding: 1px 35px 0 5px;
  position: relative;
  label, button { white-space: nowrap; }
`;
const Progress = styled.span`
  width: 1px;
  height: 8px;
  background: #f0c060;
  margin-right: auto;
`;
const field = css`
  border: 1px solid #aaa;
  border-radius: 2px;
  background: #fff;
  padding: 0 4px;
`;
const Coord = styled.input`
  ${field}
  flex: 0 1 300px;
  min-width: 120px;
  height: 20px;
  margin-left: 4px;
  text-align: center;
`;
const MouseButton = styled.button`
  width: 20px;
  height: 24px;
  border: 1px solid #8c8c8c;
  border-radius: 3px;
  background: #f4f4f4;
  display: grid;
  place-items: center;
  margin-right: 8px;
`;
const Combo = styled.div`
  display: grid;
  margin: 0 9px 0 10px;
  > * { grid-area: 1 / 1; }
  select { ${field} appearance: none; width: 86px; height: 20px; }
`;
const ComboArrow = styled.span`
  justify-self: end;
  width: 16px;
  height: 20px;
  border: 1px solid #aaa;
  background: #efefef;
  display: grid;
  place-items: center;
  pointer-events: none;
`;
const Spin = styled.div`
  display: flex;
  margin: 0 8px 0 9px;
  input { ${field} width: 82px; height: 25px; border-right: 0; }
`;
const SpinButtons = styled.div`
  width: 16px;
  display: grid;
  button { border: 1px solid #aaa; background: #efefef; display: grid; place-items: center; }
`;
const CrsButton = styled.button`
  display: flex;
  align-items: center;
  gap: 3px;
  margin: 0 21px 0 19px;
`;
const SizeGrip = styled.span`
  position: absolute;
  right: 0;
  bottom: 0;
  width: 14px;
  height: 14px;
  background: repeating-linear-gradient(135deg, #999 0 1px, #fff 1px 2px, #efefef 2px 4px);
  clip-path: polygon(100% 0, 100% 100%, 0 100%);
`;

/* ---------- attribute table window ---------- */

const Dialog = styled.section`
  position: absolute;
  left: 67px;
  top: 307px;
  width: 652px;
  background: #efefef;
  border: 1px solid #5c5c5c;
  box-shadow: 0 4px 18px rgba(0, 0, 0, 0.45);
`;
const DialogTools = styled.div`
  height: 33px;
  display: flex;
  align-items: center;
  padding: 0 0 2px 1px;
`;
const DTool = styled.button`
  width: 31px;
  height: 30px;
  display: grid;
  place-items: center;
`;
const DSep = styled.span`
  width: 1px;
  height: 26px;
  margin: 0 2px 0 3px;
  background: #999;
`;
const DRight = styled.div`
  margin-left: auto;
  display: flex;
  button { width: 26px; }
`;
const Frame = styled.div`
  margin: 0 1px;
  border: 2px solid #2d8fe0;
  border-top-color: #0a66ad;
  padding-top: 1px;
  display: grid;
  grid-template-columns: 1fr 15px;
`;
const Clipped = styled.div`
  height: 281px;
  overflow: hidden;
`;
const Grid = styled.table`
  table-layout: fixed;
  width: 100%;
  border-collapse: separate;
  border-spacing: 0;
  white-space: nowrap;
  th { font-weight: normal; background: linear-gradient(#fbfbfb, #e6e6e6); border: 0 solid #8a8a8a; border-width: 0 1px 1px 0; box-shadow: inset 1px 1px #fff, inset -1px -1px #c8c8c8; padding: 2px 3px 0; overflow: hidden; }
  thead th { height: 20px; }
  tbody th { text-align: left; }
  td { height: 30px; padding: 2px 2px 0; border: 0 solid #9c9c9c; border-width: 0 1px 1px 0; overflow: hidden; }
  td:last-child { text-align: right; padding-right: 0; border-right: 0; }
  th:last-child { text-align: left; padding-left: 17px; border-right: 0; }
`;
const Row = styled.tr<{ $sel?: boolean }>`
  background: #fff;
  &:nth-child(odd) { background: #f6f6f6; }
  ${(p) => p.$sel && css`
    && { background: #0078d7; color: #fff; }
    && td:nth-child(2) { box-shadow: inset 0 0 0 2px #00f58a; }
    && th { color: #000; }
  `}
`;
const SortMark = styled.svg`
  margin-left: 9px;
`;
const track = css`
  background: repeating-conic-gradient(#e4e4e4 0 25%, #fcfcfc 0 50%) 0 0 / 2px 2px;
`;
const VBar = styled.div`
  display: flex;
  flex-direction: column;
  justify-content: flex-end;
  ${track}
`;
const HBar = styled.div`
  display: flex;
  height: 15px;
  ${track}
`;
const BarButton = styled.button`
  width: 16px;
  height: 16px;
  border: 1px solid #8c8c8c;
  border-radius: 2px;
  background: #f6f6f6;
  display: grid;
  place-items: center;
  ${VBar} & { width: 15px; }
  ${HBar} & { height: 15px; }
`;
const Thumb = styled.div<{ $v?: boolean }>`
  border: 1px solid #8c8c8c;
  border-radius: 2px;
  background: ${(p) => (p.$v ? "linear-gradient(90deg, #fdfdfd, #e6e6e6)" : "linear-gradient(#fdfdfd, #e6e6e6)")};
  ${(p) => (p.$v ? "height: 26px; margin-bottom: 2px;" : "width: 317px; margin-left: 105px; margin-right: auto; display: grid; place-items: center;")}
`;
const Ridges = styled.span`
  width: 18px;
  height: 9px;
  background: repeating-conic-gradient(#bdbdbd 0 25%, #fff 0 50%) 0 0 / 4px 4px;
`;
const DialogFoot = styled.div`
  height: 32px;
  display: flex;
  align-items: center;
  padding: 0 2px 0 3px;
  gap: 1px;
`;
const PushButton = styled.button<{ $w: number; $on?: boolean }>`
  width: ${(p) => p.$w}px;
  height: 25px;
  border: 1px solid #888;
  border-radius: 3px;
  background: ${(p) => (p.$on ? "#d4d4d4" : "linear-gradient(#fff, #ececec)")};
  display: flex;
  align-items: center;
  justify-content: center;
  gap: 4px;
  white-space: nowrap;
`;
const Spacer = styled.span`
  flex: 1;
`;
const LowArrow = styled.span`
  align-self: flex-end;
  display: flex;
  margin-left: -4px;
  padding-bottom: 3px;
`;

const cols: [string, number?][] = [["INSEE_COM", 96], ["INSEE_ARR", 66], ["INSEE_DEP", 73], ["INSEE_REG", 67], ["CODE_EPCI", 70], ["NOM_COM_M", 144], ["POPULATION"]];
const rows = [
  ["24413", "91347", "3", "91", "11", "200057859", "LONGPONT SUR ORGE", ""],
  ["24270", "91359", "2", "91", "11", "249100157", "MAISSE", ""],
  ["24377", "91363", "3", "91", "11", "200056232", "MARCOUSSIS", ""],
  ["24333", "91374", "1", "91", "11", "200017846", "MAROLLES EN BEAUCE", ""],
  ["24407", "91376", "3", "91", "11", "200057859", "MAROLLES EN HUREPOIX", ""],
  ["24347", "91377", "3", "91", "11", "200056232", "MASSY", "4"],
  ["24382", "91378", "1", "91", "11", "249100553", "MAUCHAMPS", ""],
  ["24375", "91386", "2", "91", "11", "249100546", "MENNECY", "1"],
  ["1865", "91390", "1", "91", "11", "200017846", "MEREVILLOIS", ""],
];
const dialogTools = [
  ["pencil", "saveEdit", "refresh"],
  ["tableNew", "trash"],
  ["selExpr", "selAll", "invert", "deselect", "moveTop", "panSel2", "zoomSel", "copyY", "pasteO"],
  ["colDel", "colNew", "abacus"],
];

const AttributeTable = () => (
  <Dialog role="dialog" aria-label="Table d'attributs">
    <TitleBar>
      <Icon name="leaf" size={18} />
      <Caption as="h2">COMMUNE :: Features total: 34886, filtered: 34886, selected: 1</Caption>
      <WinButtons />
    </TitleBar>
    <DialogTools>
      {dialogTools.map((g, i) => (
        <React.Fragment key={i}>
          {i > 0 && <DSep />}
          {g.map((n) => <DTool key={n} aria-label={n}><Icon name={n} size={18} /></DTool>)}
        </React.Fragment>
      ))}
      <DRight>
        <DTool aria-label="Ancrer"><Icon name="dock" size={16} /></DTool>
        <DTool>?</DTool>
      </DRight>
    </DialogTools>
    <Frame>
      <Clipped>
        <Grid>
          <colgroup>
            <col width="42" />
            {cols.map(([n, w]) => <col key={n} width={w} />)}
          </colgroup>
          <thead>
            <tr>
              <th aria-label="Ligne" />
              {cols.map(([n], i) => (
                <th key={n} scope="col">
                  {n}
                  {i === 0 && <SortMark width="12" height="9"><path d="M.5 8.500L6 .5l5.500 8" fill="#f4f4f4" stroke="#bbb" /></SortMark>}
                </th>
              ))}
            </tr>
          </thead>
          <tbody>
            {rows.map(([id, ...cells]) => (
              <Row key={id} $sel={id === "24333"}>
                <th scope="row">{id}</th>
                {cells.map((c, i) => <td key={i}>{c}</td>)}
              </Row>
            ))}
          </tbody>
        </Grid>
      </Clipped>
      <VBar>
        <BarButton aria-label="Haut"><Arrow $dir="up" $s={4} /></BarButton>
        <Spacer />
        <Thumb $v />
        <BarButton aria-label="Monter"><Arrow $dir="up" $s={4} /></BarButton>
        <BarButton aria-label="Descendre"><Arrow $s={4} /></BarButton>
      </VBar>
      <HBar>
        <BarButton aria-label="Gauche"><Arrow $dir="left" $s={4} /></BarButton>
        <Thumb><Ridges /></Thumb>
        <BarButton aria-label="Vers la gauche"><Arrow $dir="left" $s={4} /></BarButton>
        <BarButton aria-label="Vers la droite"><Arrow $dir="right" $s={4} /></BarButton>
      </HBar>
    </Frame>
    <DialogFoot>
      <PushButton $w={160}>
        <Icon name="filter" size={16} />Montrer toutes les entités<LowArrow><Arrow $s={3} /></LowArrow>
      </PushButton>
      <Spacer />
      <PushButton $w={26} aria-label="Vue formulaire"><Icon name="form" size={18} /></PushButton>
      <PushButton $w={26} $on aria-label="Vue table"><Icon name="table" size={16} /></PushButton>
    </DialogFoot>
  </Dialog>
);

const sideIcons = ["vector", "raster", "postgis", "spatialite", "mssql", "oracle", "wms", "wcs", "wfs", "csv", "virtual"];

export default function App() {
  return (
    <>
      <Global />
      <Window>
        <TitleBar $dim>
          <Icon name="leaf" size={16} />
          <Caption>QGIS 2.14.18-Essen</Caption>
          <WinButtons />
        </TitleBar>
        <MenuBar>{menus.map((m) => <button key={m}>{m}</button>)}</MenuBar>
        <Tools groups={row1} />
        <Tools groups={row2} />
        <ToolRow role="toolbar">
          <ToolGroup>
            <Grip />
            {chips.map(([t, bg, fg]) => (
              <Tool key={t}><Chip $bg={bg} $fg={fg} $bold={t === "AD"}>{t}</Chip></Tool>
            ))}
          </ToolGroup>
        </ToolRow>
        <Body>
          <SideBar>
            <SideGrip><GripH /></SideGrip>
            {sideIcons.map((n) => <SideTool key={n} aria-label={n}><Icon name={n} /></SideTool>)}
            <SideTool aria-label="Nouvelle couche"><Icon name="vectorNew" /><Arrow /></SideTool>
            <SideTool><Chip $bg="#ffbec8" $fg="#ff1c1c" $bold>AD</Chip></SideTool>
            <SideGrip><GripH /></SideGrip>
          </SideBar>
          <Panel>
            <PanelTitle>
              <GripH /><h2>Couches</h2><GripH />
              <PanelButton aria-label="Détacher"><Svg width="10" height="10"><path d="M3.500 3V1h6v5H7M.5 4h6v5.500h-6z" fill="none" stroke="#000" strokeWidth="1.400" /></Svg></PanelButton>
              <PanelButton aria-label="Fermer le panneau"><Svg width="8" height="8"><path d="M0 0l8 8M8 0L0 8" stroke="#000" strokeWidth="1.600" /></Svg></PanelButton>
            </PanelTitle>
            <PanelTools>
              {["groupAdd", "eye", "filter", "exprFilter"].map((n) => <PanelTool key={n} aria-label={n}><Icon name={n} size={16} /></PanelTool>)}
              <PanelTool $w={12} aria-label="Options du filtre"><Arrow /></PanelTool>
              {["expand", "collapse", "remove"].map((n) => <PanelTool key={n} aria-label={n}><Icon name={n} size={16} /></PanelTool>)}
            </PanelTools>
            <LayerTree>
              <Layer>
                <Branch />
                <Check type="checkbox" id="commune" defaultChecked />
                <Swatch />
                <label htmlFor="commune">COMMUNE</label>
              </Layer>
            </LayerTree>
          </Panel>
          <MapView />
        </Body>
        <StatusBar>
          <Progress />
          <label htmlFor="coord">Coordonnée</label>
          <Coord id="coord" defaultValue="630658,6810419" />
          <MouseButton aria-label="Suivi de la souris"><Icon name="mouse" size={16} /></MouseButton>
          <label htmlFor="scale">Échelle</label>
          <Combo>
            <select id="scale"><option>1:60 414</option></select>
            <ComboArrow><Arrow $s={4} /></ComboArrow>
          </Combo>
          <label htmlFor="rot">Rotation</label>
          <Spin>
            <input id="rot" defaultValue="0,0" />
            <SpinButtons>
              <button aria-label="Augmenter"><Arrow $dir="up" $s={4} /></button>
              <button aria-label="Diminuer"><Arrow $s={4} /></button>
            </SpinButtons>
          </Spin>
          <Check type="checkbox" id="render" defaultChecked />
          <label htmlFor="render">&nbsp;Rendu</label>
          <CrsButton><Icon name="crs" size={16} />EPSG:2154</CrsButton>
          <button aria-label="Messages"><Icon name="bubble" size={17} /></button>
          <SizeGrip />
        </StatusBar>
        <AttributeTable />
      </Window>
    </>
  );
}
